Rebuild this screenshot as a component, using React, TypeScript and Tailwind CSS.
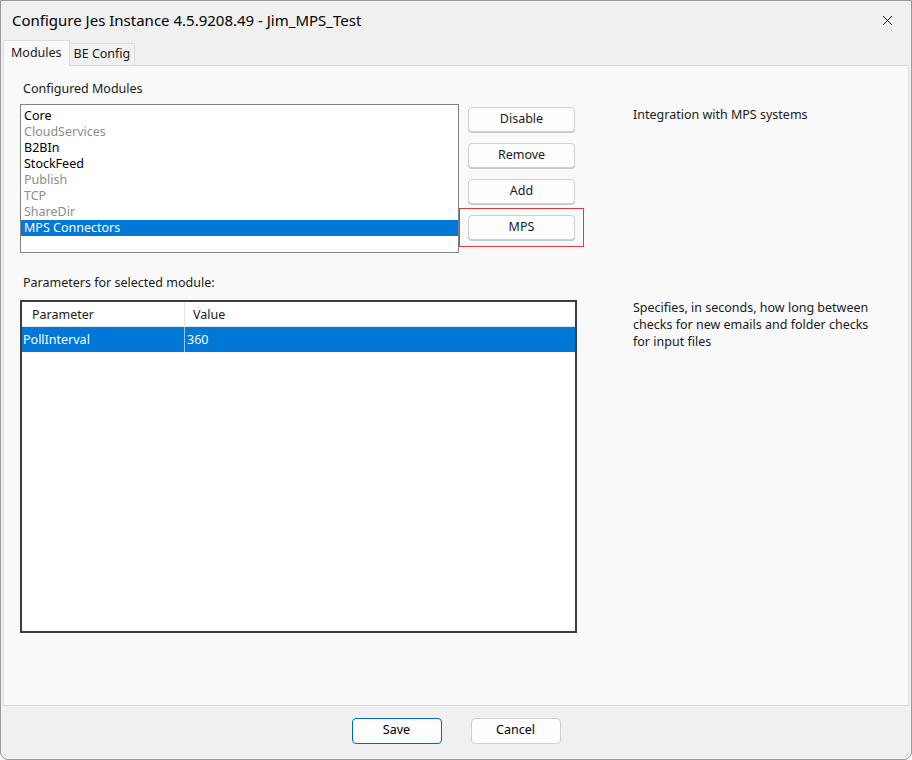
import { X } from "lucide-react";

const modules: { name: string; enabled: boolean; selected?: boolean }[] = [
  { name: "Core", enabled: true },
  { name: "CloudServices", enabled: false },
  { name: "B2BIn", enabled: true },
  { name: "StockFeed", enabled: true },
  { name: "Publish", enabled: false },
  { name: "TCP", enabled: false },
  { name: "ShareDir", enabled: false },
  { name: "MPS Connectors", enabled: true, selected: true },
];

function Btn({ label }: { label: string }) {
  return (
    <button className="h-[25px] w-[107px] rounded-[4px] border border-[#d0d0d0] bg-[#fdfdfd] text-[12.5px] text-[#1a1a1a] shadow-[0_1px_0_#c8c8c8]">
      {label}
    </button>
  );
}

export default function App() {
  return (
    <div className="flex h-[760px] w-[912px] flex-col overflow-hidden rounded-b-[8px] border border-[#9a9a9a] bg-[#f0f0f0] font-['Noto_Sans',sans-serif] text-[12.5px] text-[#1a1a1a]">
      {/* title bar */}
      <div className="flex h-[38px] shrink-0 items-center justify-between pl-[11px] pr-[15px]">
        <span className="text-[15px] text-black">Configure Jes Instance 4.5.9208.49 - Jim_MPS_Test</span>
        <X size={17} strokeWidth={1.3} className="text-black" />
      </div>

      {/* tabs */}
      <div className="flex h-[26px] shrink-0 items-end pl-[2px]">
        <div className="relative z-10 -mb-px flex h-[26px] items-center border border-b-0 border-[#dcdcdc] bg-[#f9f9f9] px-[7px]">
          Modules
        </div>
        <div className="flex h-[22px] items-center border border-l-0 border-b-0 border-[#dcdcdc] bg-[#f0f0f0] px-[4px]">
          BE Config
        </div>
      </div>

      {/* tab page */}
      <div className="mx-[2px] flex h-[641px] shrink-0 border border-[#dcdcdc] bg-[#f9f9f9] pl-[16px] pt-[14px]">
        <div className="flex w-[564px] flex-col">
          <div className="pl-[3px] leading-[18px]">Configured Modules</div>
          <div className="mt-[6px] flex">
            <div className="h-[149px] w-[439px] border border-[#828282] bg-white pt-[3px]">
              {modules.map((m) => (
                <div
                  key={m.name}
                  className={
                    "h-[16px] overflow-hidden pl-[3px] leading-[16px] " +
                    (m.selected
                      ? "bg-[#0078d7] text-white"
                      : m.enabled
                        ? "text-black"
                        : "text-[#8c8c8c]")
                  }
                >
                  {m.name}
                </div>
              ))}
            </div>
            <div className="ml-[9px] flex flex-col gap-[11px] pt-[3px]">
              <Btn label="Disable" />
              <Btn label="Remove" />
              <Btn label="Add" />
              <div className="-mx-[9px] -mt-[7px] border-[1.5px] border-[#e8383d] px-[8px] py-[6px]">
                <Btn label="MPS" />
              </div>
            </div>
          </div>

          <div className="mt-[21px] pl-[3px] leading-[18px]">Parameters for selected module:</div>
          <div className="mt-[8px] h-[333px] w-[557px] border-2 border-[#3c3c3c] bg-white">
            <div className="flex h-[25px] border-b border-[#e5e5e5] pt-[1px]">
              <div className="w-[163px] border-r border-[#e5e5e5] pl-[10px] leading-[24px]">Parameter</div>
              <div className="pl-[8px] leading-[24px]">Value</div>
            </div>
            <div className="flex h-[25px] bg-[#0078d7] text-white">
              <div className="w-[163px] border-r border-[#9cc3e8] pl-[1px] leading-[25px]">PollInterval</div>
              <div className="pl-[2px] leading-[25px]">360</div>
            </div>
          </div>
        </div>

        <div className="ml-[49px] flex flex-col">
          <div className="mt-[26px] leading-[17px]">Integration with MPS systems</div>
          <div className="mt-[176px] w-[250px] leading-[17px]">
            Specifies, in seconds, how long between checks for new emails and folder checks for input files
          </div>
        </div>
      </div>

      {/* footer */}
      <div className="flex flex-1 items-center justify-center gap-[29px] pb-[4px]">
        <button className="h-[26px] w-[90px] rounded-[4px] border border-[#0067c0] bg-[#fdfdfd] text-[12.5px] text-black">
          Save
        </button>
        <button className="h-[26px] w-[90px] rounded-[4px] border border-[#d0d0d0] bg-[#fdfdfd] text-[12.5px] text-black">
          Cancel
        </button>
      </div>
    </div>
  );
}
